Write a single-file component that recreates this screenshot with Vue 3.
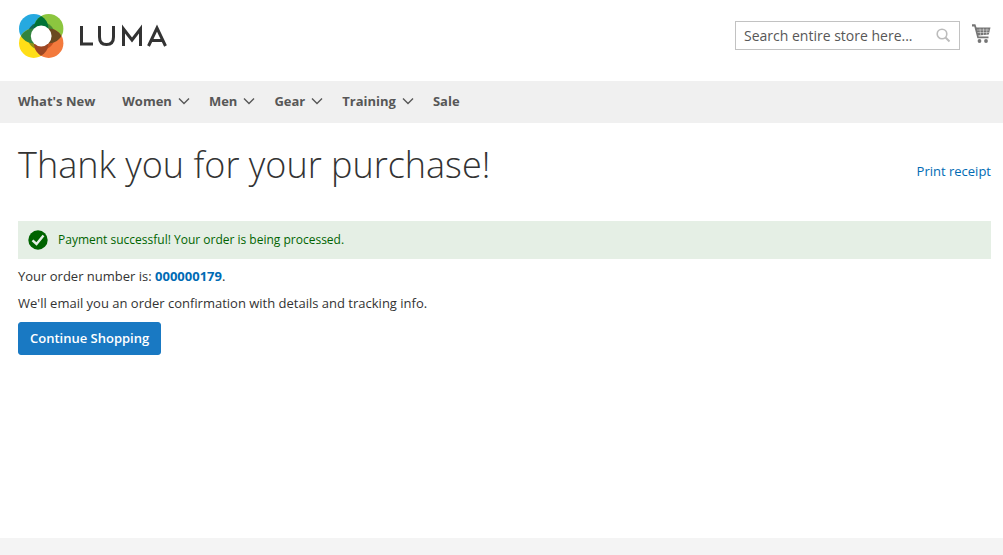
<script setup>
const menu = [
  { label: "What's New", sub: false, first: true },
  { label: 'Women', sub: true },
  { label: 'Men', sub: true },
  { label: 'Gear', sub: true },
  { label: 'Training', sub: true },
  { label: 'Sale', sub: false },
]
</script>

<template>
  <div class="page">
    <header class="header">
      <a class="logo" href="#" aria-label="Luma home">
        <svg width="149" height="46" viewBox="0 0 149 46" aria-hidden="true">
          <defs>
            <clipPath id="tl"><circle cx="14.700" cy="15.700" r="14.700" /></clipPath>
            <clipPath id="tr"><circle cx="29.700" cy="15.700" r="14.700" /></clipPath>
            <clipPath id="bl"><circle cx="14.700" cy="30.200" r="14.700" /></clipPath>
            <clipPath id="br"><circle cx="29.700" cy="30.200" r="14.700" /></clipPath>
          </defs>
          <circle cx="14.700" cy="15.700" r="14.700" fill="#26a9e0" />
          <circle cx="29.700" cy="15.700" r="14.700" fill="#8cc63f" />
          <circle cx="14.700" cy="30.200" r="14.700" fill="#ffde17" />
          <circle cx="29.700" cy="30.200" r="14.700" fill="#f37a3d" />
          <path d="M22.200 23V9A14 14 0 0 0 8.200 23Z" fill="#136755" />
          <path d="M22.200 23V9A14 14 0 0 1 36.200 23Z" fill="#488b35" />
          <path d="M22.200 23V37A14 14 0 0 1 8.200 23Z" fill="#929116" />
          <path d="M22.200 23V37A14 14 0 0 0 36.200 23Z" fill="#c65020" />
          <circle cx="14.700" cy="15.700" r="14.700" fill="#007236" clip-path="url(#tr)" />
          <circle cx="14.700" cy="15.700" r="14.700" fill="#32843e" clip-path="url(#bl)" />
          <circle cx="29.700" cy="15.700" r="14.700" fill="#6b4a20" clip-path="url(#br)" />
          <circle cx="14.700" cy="30.200" r="14.700" fill="#9c4723" clip-path="url(#br)" />
          <circle cx="22.200" cy="23" r="10.400" fill="#fff" />
          <g fill="none" stroke="#333" stroke-width="3">
            <path d="M62.500 13V31H74" />
            <path d="M80.500 13V24Q80.500 31.500 87.500 31.500Q94.500 31.500 94.500 24V13" />
            <path d="M104.500 33V16L113 27L121.500 16V33" />
            <path d="M129.500 33L138 15L146.500 33M133 27.500H143" />
          </g>
        </svg>
      </a>
      <div class="tools">
        <form class="search" role="search" @submit.prevent>
          <input type="search" aria-label="Search" placeholder="Search entire store here..." />
          <button type="submit" aria-label="Search">
            <svg width="16" height="16" viewBox="0 0 16 16" fill="none" stroke="#bcbcbc">
              <circle cx="7" cy="6" r="4.800" stroke-width="1.600" />
              <path d="M10.500 9.500L14.500 13.500" stroke-width="2" />
            </svg>
          </button>
        </form>
        <a class="cart" href="#" aria-label="My Cart">
          <svg width="19" height="20" viewBox="0 0 19 20">
            <path d="M0 .3H3.400L4.500 3.500H18.500L16.800 10.500L6.300 11.500L6.700 12.500H16.500V14.200H5.400L2.300 2.500H0Z" fill="#757575" />
            <path d="M5 6H17.500M5.500 8.500H17M8 4.500L8.500 11M11.500 4.500V11M15 4.500L14.500 10.500" stroke="#fff" stroke-width=".45" />
            <circle cx="7.500" cy="17" r="1.900" fill="#757575" />
            <circle cx="14" cy="17" r="1.900" fill="#757575" />
          </svg>
        </a>
      </div>
    </header>

    <nav class="nav" aria-label="Main">
      <a v-for="item in menu" :key="item.label" href="#" :class="{ first: item.first }">
        {{ item.label }}
        <svg v-if="item.sub" width="12" height="8" viewBox="0 0 12 8" fill="none" stroke="#575757" stroke-width="1.400">
          <path d="M1 1.500L6 6.500L11 1.500" />
        </svg>
      </a>
    </nav>

    <main class="main">
      <div class="title">
        <h1>Thank you for your purchase!</h1>
        <a href="#">Print receipt</a>
      </div>
      <div class="message" role="status">
        <svg width="20" height="20" viewBox="0 0 20 20" aria-hidden="true">
          <circle cx="10" cy="10" r="9.700" fill="#006400" />
          <path d="M4.500 10.300L8.500 14L15.500 5.500" fill="none" stroke="#e5efe5" stroke-width="2.400" />
        </svg>
        <span>Payment successful! Your order is being processed.</span>
      </div>
      <p>Your order number is: <a href="#"><strong>000000179</strong></a>.</p>
      <p>We'll email you an order confirmation with details and tracking info.</p>
      <button class="primary" type="button">Continue Shopping</button>
    </main>
    <footer class="footer"></footer>
  </div>
</template>

<style>
body {
  margin: 0;
  background: #fff;
}
</style>

<style scoped>
.page {
  min-height: 100vh;
  display: flex;
  flex-direction: column;
  font-family: "Open Sans", "Noto Sans", sans-serif;
  font-size: 13px;
  line-height: 19px;
  color: #333;
}
a {
  color: #006bb4;
  text-decoration: none;
}
.header {
  display: flex;
  justify-content: space-between;
  align-items: flex-start;
  height: 81px;
  padding: 0 12px 0 18px;
  box-sizing: border-box;
}
.logo {
  margin: 13px 0 0 1px;
}
.logo svg,
.cart svg {
  display: block;
}
.tools {
  display: flex;
  gap: 12px;
  padding-top: 21px;
}
.search {
  display: flex;
  align-items: center;
  box-sizing: border-box;
  width: 225px;
  height: 29px;
  border: 1px solid #c2c2c2;
  padding: 0 8px;
}
.search input {
  flex: 1;
  min-width: 0;
  padding: 0;
  border: 0;
  outline: 0;
  background: none;
  font: 14px/20px "Open Sans", "Noto Sans", sans-serif;
}
.search input::placeholder {
  color: #575757;
  opacity: 1;
}
.search button {
  padding: 0;
  border: 0;
  background: none;
}
.search button svg {
  display: block;
}
.cart {
  padding-top: 3px;
}
.nav {
  display: flex;
  align-items: center;
  gap: 19px;
  height: 42px;
  box-sizing: border-box;
  padding: 0 18px 2px;
  background: #f0f0f0;
}
.nav a {
  display: flex;
  align-items: center;
  gap: 6px;
  font-weight: 700;
  color: #575757;
}
.nav .first {
  margin-right: 8px;
}
.main {
  flex: 1;
  padding: 16px 12px 0 18px;
}
.title {
  display: flex;
  justify-content: space-between;
  align-items: center;
  margin-bottom: 30px;
}
h1 {
  margin: 0;
  font-size: 36px;
  line-height: 52px;
  font-weight: 300;
}
.title a {
  padding-top: 12px;
}
.message {
  display: flex;
  align-items: center;
  gap: 10px;
  padding: 9px 10px;
  margin-bottom: 8px;
  background: #e5efe5;
  color: #006400;
  font-size: 12px;
}
.message span {
  line-height: 18px;
}
p {
  margin: 0 0 8px;
}
.primary {
  height: 33px;
  margin-top: 1px;
  padding: 0 11px 2px;
  border: 1px solid #1979c3;
  border-radius: 3px;
  background: #1979c3;
  color: #fff;
  font: 600 13px/16px "Open Sans", "Noto Sans", sans-serif;
}
.footer {
  height: 17px;
  background: #f4f4f4;
}
</style>
